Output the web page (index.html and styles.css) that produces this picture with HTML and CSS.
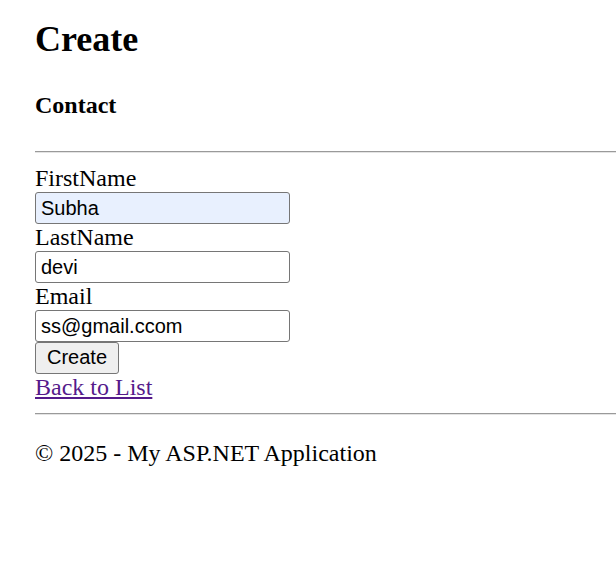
FILE: index.html
```html
<!DOCTYPE html>
<html>
<head>
<meta charset="utf-8">
<title>Create</title>
<link rel="stylesheet" href="styles.css">
</head>
<body>
<div class="container">
  <h1 class="title">Create</h1>
  <h4 class="subtitle">Contact</h4>
  <hr class="rule">
  <form class="form">
    <div class="field">
      <label class="label" for="fn">FirstName</label>
      <div><input id="fn" class="input input-filled" type="text" value="Subha"></div>
    </div>
    <div class="field">
      <label class="label" for="ln">LastName</label>
      <div><input id="ln" class="input" type="text" value="devi"></div>
    </div>
    <div class="field">
      <label class="label" for="em">Email</label>
      <div><input id="em" class="input" type="text" value="ss@gmail.ccom"></div>
    </div>
    <div><button type="button" class="button">Create</button></div>
  </form>
  <div><a class="link" href="#">Back to List</a></div>
  <hr class="rule rule-footer">
  <footer class="footer"><p class="copy">© 2025 - My ASP.NET Application</p></footer>
</div>
</body>
</html>
```
FILE: styles.css
```css
html, body {
  margin: 0;
  padding: 0;
  background: #fff;
  overflow: hidden;
}
body {
  font-family: "Liberation Serif", "Times New Roman", serif;
  font-size: 24px;
  color: #000;
}
.container {
  padding: 18px 0 0 35px;
}
.title {
  font-size: 36px;
  font-weight: bold;
  margin: 0 0 32px 0;
  line-height: normal;
}
.subtitle {
  font-size: 24px;
  font-weight: bold;
  margin: 0 0 32px 0;
  line-height: normal;
}
.rule {
  height: 0;
  margin: 0 0 12px 0;
  border: 0;
  border-top: 1px solid #9a9a9a;
  border-bottom: 1px solid #e4e4e4;
}
.rule-footer {
  margin-top: 12px;
  margin-bottom: 25px;
}
.form {
  margin: 0;
}
.label {
  display: inline-block;
  line-height: normal;
}
.field > div, .form > div {
  line-height: 0;
}
.input {
  box-sizing: border-box;
  width: 255px;
  height: 32px;
  margin: 0;
  padding: 1px 5px;
  border: 1px solid #767676;
  border-radius: 3px;
  font-family: "Liberation Sans", Arial, sans-serif;
  font-size: 20px;
  color: #000;
  background: #fff;
  vertical-align: top;
}
.input-filled {
  background: #e8f0fe;
}
.button {
  box-sizing: border-box;
  width: 84px;
  height: 32px;
  margin: 0;
  padding: 0 9px 2px;
  border: 1px solid #767676;
  border-radius: 3px;
  background: #efefef;
  font-family: "Liberation Sans", Arial, sans-serif;
  font-size: 20px;
  color: #000;
  vertical-align: top;
}
.link {
  color: #551a8b;
  text-decoration: underline;
  line-height: normal;
}
.footer {
  margin: 0;
}
.copy {
  margin: 0;
  line-height: normal;
}
```
